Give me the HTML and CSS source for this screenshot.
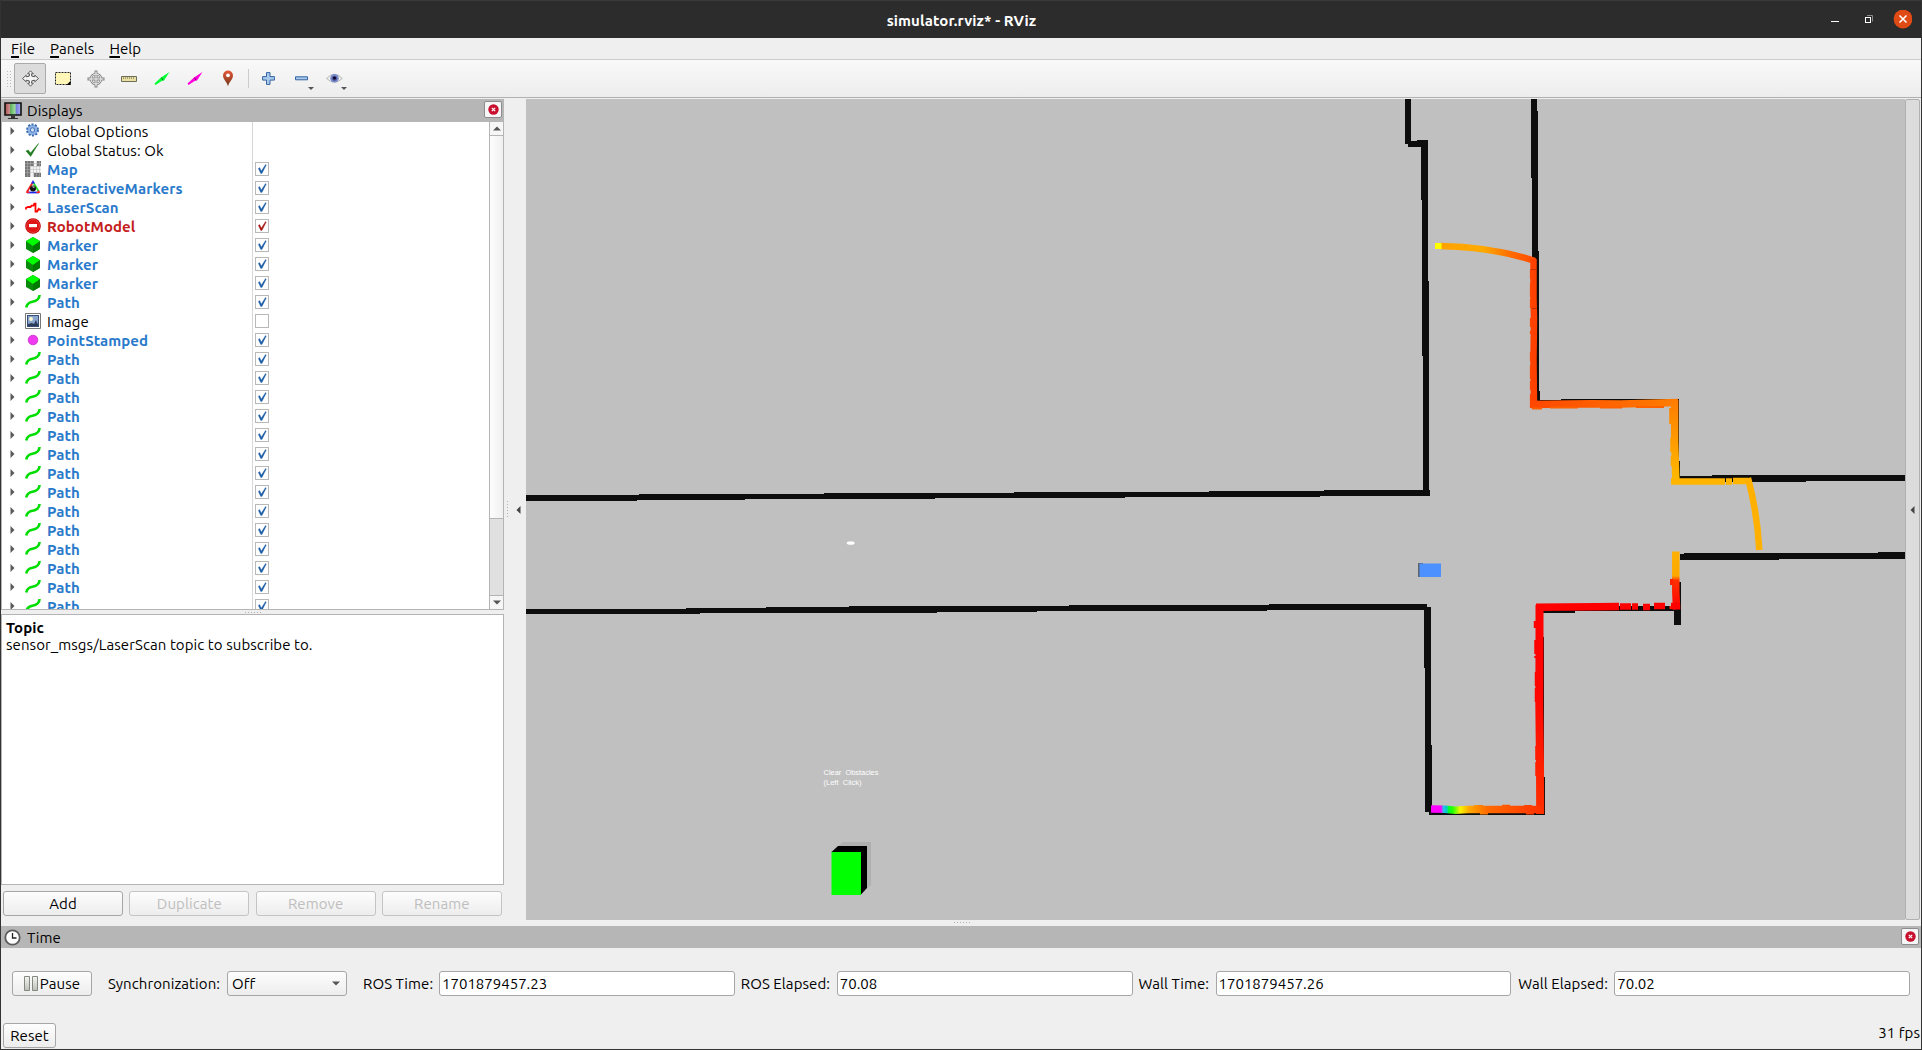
FILE: index.html
```html
<!DOCTYPE html>
<html lang="en">
<head>
<meta charset="utf-8">
<title>simulator.rviz* - RViz</title>
<link rel="stylesheet" href="styles.css">
</head>
<body>
<svg class="sprite" width="0" height="0" aria-hidden="true">
  <defs>
    <linearGradient id="gloss" x1="0" y1="0" x2="0" y2="1"><stop offset="0" stop-color="#e8563a"/><stop offset="1" stop-color="#6e3a1a"/></linearGradient>
    <linearGradient id="bar" x1="0" y1="0" x2="0" y2="1"><stop offset="0" stop-color="#f4f5f2"/><stop offset="1" stop-color="#bcc0b8"/></linearGradient>
    <linearGradient id="screen" x1="0" y1="0" x2="1" y2="0"><stop offset="0" stop-color="#a85050"/><stop offset=".3" stop-color="#d09090"/><stop offset=".34" stop-color="#60b060"/><stop offset=".64" stop-color="#a0e0a0"/><stop offset=".68" stop-color="#7078d8"/><stop offset="1" stop-color="#b0b0f4"/></linearGradient>
  </defs>
  <symbol id="arrow" viewBox="0 0 5 8"><path d="M0.5 0v8L4.5 4z" fill="#5a5a5a"/></symbol>
  <symbol id="check" viewBox="0 0 12 12"><path d="M2.300 5.400L3.700 4.600 5.300 8 9.500 1.600 10.300 2.100 6 10.400H4.700z" fill="currentColor" stroke="currentColor" stroke-width=".3"/></symbol>
  <symbol id="path" viewBox="0 0 16 16"><path d="M1.200 13.500C2 9.500 4.800 8.300 7.500 7.800S14.200 6.500 14.600 1" fill="none" stroke="#0d0" stroke-width="2.600"/></symbol>
  <symbol id="marker" viewBox="0 0 16 16"><path d="M8 0l7 4v8l-7 4-7-4V4z" fill="#0a8a0a"/><path d="M8 0l7 4.200L8 9 1 4.200z" fill="#0f0"/><path d="M8 9l7-4.800V12l-7 4z" fill="#007a00"/></symbol>
  <symbol id="gear" viewBox="0 0 16 16"><circle cx="7.500" cy="7" r="5.400" fill="#8fb3e6" stroke="#3c6bb0" stroke-width="2.200" stroke-dasharray="2 1.400"/><circle cx="7.500" cy="7" r="4.600" fill="#8fb3e6"/><circle cx="7.500" cy="7" r="2.200" fill="#cfe0f6" stroke="#3c6bb0" stroke-width=".9"/></symbol>
  <symbol id="ok" viewBox="0 0 16 16"><path d="M1 9l2.200-1L5.500 11 13.500 1.500 5.700 14.400z" fill="#1f7a1f" stroke="#1f7a1f" stroke-width=".5"/></symbol>
  <symbol id="map" viewBox="0 0 16 16"><path d="M0 0h16v16H0z" fill="#f4f4f4"/><path d="M0 0h9v5H5v11H0zM12 0h4v5h-4zM9 12h7v4H9z" fill="#777"/><path d="M2.500 0v16M5.500 0v16M8.500 0v16M11.500 0v16M14.500 0v16M0 2.500h16M0 5.500h16M0 8.500h16M0 11.500h16" stroke="#b4b4b4" stroke-width=".5"/></symbol>
  <symbol id="imark" viewBox="0 0 16 16"><path d="M8 2L2 12" stroke="#e22" stroke-width="1.800"/><path d="M8 2l6 10" stroke="#2d2" stroke-width="1.800"/><path d="M2 12.500h12" stroke="#22e" stroke-width="1.800"/><path d="M8 0l2 3.500H6z" fill="#22f"/><path d="M1 13l1-3 3 3z" fill="#f22"/><path d="M15 13l-1-3-3 3z" fill="#f22"/><circle cx="8" cy="8.500" r="3" fill="#111"/><path d="M6 6.500h4L9 8z" fill="#ccc"/></symbol>
  <symbol id="laser" viewBox="0 0 16 16"><path d="M1 10.500V8.800l2-.8h2.500l1-1.300h2l.8-2h1.200v7.800h1.600l1.600-2.700 1 .9h1.500" fill="none" stroke="#f00" stroke-width="1.800"/></symbol>
  <symbol id="stop" viewBox="0 0 16 16"><circle cx="8" cy="8" r="7.800" fill="#c00000"/><circle cx="8" cy="8" r="6.500" fill="#e01414" stroke="#f06060" stroke-width=".6"/><path d="M4 6h8v3.200H4z" fill="#fff"/></symbol>
  <symbol id="image" viewBox="0 0 16 16"><path d="M.5.5h15v15H.5z" fill="#fff" stroke="#777"/><path d="M2 2h12v12H2z" fill="#384f78"/><path d="M3 3h10v8H3z" fill="#8ba6cc"/><circle cx="6" cy="6" r="1.900" fill="#fffbd0"/><path d="M3 11l4-1 2 1 2-4 1 3 1 1v2H3z" fill="#2b3b58"/></symbol>
  <symbol id="point" viewBox="0 0 16 16"><circle cx="8" cy="8" r="4.800" fill="#f03af0" stroke="#c020c0" stroke-width=".7"/></symbol>
  <symbol id="closer" viewBox="0 0 11 11"><circle cx="5.500" cy="5.500" r="5.200" fill="#c8102e"/><path d="M3.800 3.800l3.400 3.400M7.200 3.800L3.800 7.200" stroke="#fff" stroke-width="1.200"/></symbol>
</svg>

<div class="window">
  <header class="titlebar">
    <span class="title">simulator.rviz* - RViz</span>
    <div class="controls">
      <svg width="84" height="20" viewBox="0 0 84 20">
        <path d="M3 11.500h8" stroke="#fff"/>
        <path d="M39 5.500h5.500v6" fill="none" stroke="#8a8a8a"/>
        <rect x="37.500" y="7.500" width="5" height="5" fill="none" stroke="#fff"/>
        <circle cx="75" cy="9" r="9.400" fill="#e04a14"/><path d="M71.500 5.500l7 7M78.500 5.500l-7 7" stroke="#fff" stroke-width="1.600"/>
      </svg>
    </div>
  </header>

  <nav class="menubar"><span><u>F</u>ile</span><span><u>P</u>anels</span><span><u>H</u>elp</span></nav>

  <div class="toolbar">
    <span class="grip"></span>
    <span class="tool active"><svg width="17" height="17" viewBox="0 0 17 17"><path d="M8.500.8l2.800 3H9.500l.3 2.400 3 .6V5.200l3.700 3.300-3.700 3.300v-1.600l-3 .6-.3 2.400h1.800l-2.800 3-2.800-3h1.800l-.3-2.400-3-.6v1.600L.5 8.500l3.700-3.300v1.600l3-.6.3-2.400H5.700z" fill="#f4f4f4" stroke="#5a5a5a" stroke-width="1"/></svg></span>
    <span class="tool"><svg width="18" height="16" viewBox="0 0 18 16"><path d="M1.500 1.500h15v12h-15z" fill="#fff6b8" stroke="#222" stroke-dasharray="2 1"/><path d="M16.500 10v4h-4z"/></svg></span>
    <span class="tool"><svg width="18" height="18" viewBox="0 0 18 18"><path d="M9 .5v17M.5 9h17" stroke="#858585" stroke-width="3"/><circle cx="9" cy="9" r="5" fill="none" stroke="#858585" stroke-width="2.600"/><circle cx="9" cy="9" r="5" fill="none" stroke="#f4f4f4" stroke-width="1"/><path d="M9 1.500v15M1.500 9h15" stroke="#f4f4f4" stroke-width="1"/></svg></span>
    <span class="tool"><svg width="17" height="16" viewBox="0 0 17 16"><path d="M.5 5.500h15v5H.5z" fill="#ebe0a4" stroke="#6e6e58"/><path d="M2.500 6v2M4.500 6v2M6.500 6v2M8.500 6v2M10.500 6v2M12.500 6v2" stroke="#8a8460" stroke-width=".7"/></svg></span>
    <span class="tool"><svg width="16" height="16" viewBox="0 0 16 16"><path d="M.5 12.500L7 6.500 15.500 1 10 9.500H8.500L1.500 14z" fill="#0f3"/><path d="M7.500 6.500l1.500 3" stroke="#080"/></svg></span>
    <span class="tool"><svg width="16" height="16" viewBox="0 0 16 16"><path d="M.5 12.500L7 6.500 15.500 1 10 9.500H8.500L1.500 14z" fill="#f0d"/><path d="M7.500 6.500l1.500 3" stroke="#807"/></svg></span>
    <span class="tool"><svg width="12" height="17" viewBox="0 0 12 17"><path d="M6 16.500C5 11.500 1 9.500 1 5.500a5 5 0 0 1 10 0c0 4-4 6-5 11z" fill="url(#gloss)"/><circle cx="6" cy="5.300" r="1.900" fill="#fff"/></svg></span>
    <span class="split"></span>
    <span class="tool"><svg width="13" height="13" viewBox="0 0 13 13"><path d="M4.500.6h3.500v4h4.400v3.500H8v4.300H4.500V8.100H.6V4.600h3.900z" fill="#a9c9ea" stroke="#3465a4"/></svg></span>
    <span class="tool drop"><svg width="13" height="13" viewBox="0 0 13 13"><path d="M.5 4.800h12v3H.5z" fill="#a9c9ea" stroke="#3465a4"/></svg></span>
    <span class="tool drop"><svg width="17" height="13" viewBox="0 0 17 13"><path d="M.6 6.500Q8.300-2 16.300 6.500 8.300 14 .6 6.500z" fill="#f2f2f2" stroke="#b4b4b4"/><circle cx="8.500" cy="6.300" r="4.300" fill="#7c8fcc"/><circle cx="8.500" cy="6.300" r="2.600" fill="#4a5a9c"/><circle cx="8.500" cy="6" r="1.500" fill="#102"/></svg></span>
  </div>

  <main class="work">
    <section class="dock">
      <div class="dock-head"><svg width="18" height="18" viewBox="0 0 18 18"><path d="M1 1h16v12H1z" fill="url(#screen)" stroke="#111" stroke-width="1.600"/><path d="M7 14h4v2h3v1H4v-1h3z" fill="#333"/></svg><span>Displays</span><span class="close"><svg width="11" height="11"><use href="#closer"/></svg></span></div>
      <div class="tree">
        <div class="rows">
          <div class="row plain"><svg class="a"><use href="#arrow"/></svg><svg class="i"><use href="#gear"/></svg><span class="n">Global Options</span></div>
          <div class="row plain"><svg class="a"><use href="#arrow"/></svg><svg class="i"><use href="#ok"/></svg><span class="n">Global Status: Ok</span></div>
          <div class="row"><svg class="a"><use href="#arrow"/></svg><svg class="i"><use href="#map"/></svg><span class="n">Map</span><svg class="c"><use href="#check"/></svg></div>
          <div class="row"><svg class="a"><use href="#arrow"/></svg><svg class="i"><use href="#imark"/></svg><span class="n">InteractiveMarkers</span><svg class="c"><use href="#check"/></svg></div>
          <div class="row"><svg class="a"><use href="#arrow"/></svg><svg class="i"><use href="#laser"/></svg><span class="n">LaserScan</span><svg class="c"><use href="#check"/></svg></div>
          <div class="row error"><svg class="a"><use href="#arrow"/></svg><svg class="i"><use href="#stop"/></svg><span class="n">RobotModel</span><svg class="c"><use href="#check"/></svg></div>
          <div class="row"><svg class="a"><use href="#arrow"/></svg><svg class="i"><use href="#marker"/></svg><span class="n">Marker</span><svg class="c"><use href="#check"/></svg></div>
          <div class="row"><svg class="a"><use href="#arrow"/></svg><svg class="i"><use href="#marker"/></svg><span class="n">Marker</span><svg class="c"><use href="#check"/></svg></div>
          <div class="row"><svg class="a"><use href="#arrow"/></svg><svg class="i"><use href="#marker"/></svg><span class="n">Marker</span><svg class="c"><use href="#check"/></svg></div>
          <div class="row"><svg class="a"><use href="#arrow"/></svg><svg class="i"><use href="#path"/></svg><span class="n">Path</span><svg class="c"><use href="#check"/></svg></div>
          <div class="row plain"><svg class="a"><use href="#arrow"/></svg><svg class="i"><use href="#image"/></svg><span class="n">Image</span><svg class="c"></svg></div>
          <div class="row"><svg class="a"><use href="#arrow"/></svg><svg class="i"><use href="#point"/></svg><span class="n">PointStamped</span><svg class="c"><use href="#check"/></svg></div>
          <div class="row"><svg class="a"><use href="#arrow"/></svg><svg class="i"><use href="#path"/></svg><span class="n">Path</span><svg class="c"><use href="#check"/></svg></div>
          <div class="row"><svg class="a"><use href="#arrow"/></svg><svg class="i"><use href="#path"/></svg><span class="n">Path</span><svg class="c"><use href="#check"/></svg></div>
          <div class="row"><svg class="a"><use href="#arrow"/></svg><svg class="i"><use href="#path"/></svg><span class="n">Path</span><svg class="c"><use href="#check"/></svg></div>
          <div class="row"><svg class="a"><use href="#arrow"/></svg><svg class="i"><use href="#path"/></svg><span class="n">Path</span><svg class="c"><use href="#check"/></svg></div>
          <div class="row"><svg class="a"><use href="#arrow"/></svg><svg class="i"><use href="#path"/></svg><span class="n">Path</span><svg class="c"><use href="#check"/></svg></div>
          <div class="row"><svg class="a"><use href="#arrow"/></svg><svg class="i"><use href="#path"/></svg><span class="n">Path</span><svg class="c"><use href="#check"/></svg></div>
          <div class="row"><svg class="a"><use href="#arrow"/></svg><svg class="i"><use href="#path"/></svg><span class="n">Path</span><svg class="c"><use href="#check"/></svg></div>
          <div class="row"><svg class="a"><use href="#arrow"/></svg><svg class="i"><use href="#path"/></svg><span class="n">Path</span><svg class="c"><use href="#check"/></svg></div>
          <div class="row"><svg class="a"><use href="#arrow"/></svg><svg class="i"><use href="#path"/></svg><span class="n">Path</span><svg class="c"><use href="#check"/></svg></div>
          <div class="row"><svg class="a"><use href="#arrow"/></svg><svg class="i"><use href="#path"/></svg><span class="n">Path</span><svg class="c"><use href="#check"/></svg></div>
          <div class="row"><svg class="a"><use href="#arrow"/></svg><svg class="i"><use href="#path"/></svg><span class="n">Path</span><svg class="c"><use href="#check"/></svg></div>
          <div class="row"><svg class="a"><use href="#arrow"/></svg><svg class="i"><use href="#path"/></svg><span class="n">Path</span><svg class="c"><use href="#check"/></svg></div>
          <div class="row"><svg class="a"><use href="#arrow"/></svg><svg class="i"><use href="#path"/></svg><span class="n">Path</span><svg class="c"><use href="#check"/></svg></div>
          <div class="row"><svg class="a"><use href="#arrow"/></svg><svg class="i"><use href="#path"/></svg><span class="n">Path</span><svg class="c"><use href="#check"/></svg></div>
        </div>
        <div class="scroll"><span class="sb"><svg width="8" height="5"><path d="M0 4.500L4 .5l4 4z" fill="#555"/></svg></span><span class="thumb"></span><span class="trough"></span><span class="sb down"><svg width="8" height="5"><path d="M0 .5L4 4.500l4-4z" fill="#555"/></svg></span></div>
      </div>
      <div class="hsplit"><i class="dots"></i></div>
      <div class="desc"><b>Topic</b><span>sensor_msgs/LaserScan topic to subscribe to.</span></div>
      <div class="actions"><button>Add</button><button disabled>Duplicate</button><button disabled>Remove</button><button disabled>Rename</button></div>
    </section>

    <div class="vsplit"><i class="vdots"></i><svg width="5" height="8"><path d="M4.500 0v8L.5 4z" fill="#444"/></svg></div>

    <svg class="scene" width="1379" height="821" viewBox="526 99 1379 821">
      <defs>
        <linearGradient id="g-arc" gradientUnits="userSpaceOnUse" x1="1441" y1="0" x2="1535" y2="0"><stop offset="0" stop-color="#ffa200"/><stop offset=".45" stop-color="#ffaa00"/><stop offset=".75" stop-color="#ff6a00"/><stop offset="1" stop-color="#ff4a00"/></linearGradient>
        <linearGradient id="g-top" gradientUnits="userSpaceOnUse" x1="1535" y1="0" x2="1678" y2="0"><stop offset="0" stop-color="#ff4800"/><stop offset="1" stop-color="#ff7e00"/></linearGradient>
        <linearGradient id="g-right" gradientUnits="userSpaceOnUse" x1="0" y1="400" x2="0" y2="484"><stop offset="0" stop-color="#ff7c00"/><stop offset="1" stop-color="#ffbc00"/></linearGradient>
        <linearGradient id="g-low" gradientUnits="userSpaceOnUse" x1="0" y1="552" x2="0" y2="609"><stop offset="0" stop-color="#ffb000"/><stop offset=".42" stop-color="#ffa800"/><stop offset=".5" stop-color="#ff3000"/><stop offset="1" stop-color="#f00"/></linearGradient>
        <linearGradient id="g-down" gradientUnits="userSpaceOnUse" x1="0" y1="604" x2="0" y2="814"><stop offset="0" stop-color="#f00"/><stop offset=".4" stop-color="#ff0400"/><stop offset="1" stop-color="#ff3000"/></linearGradient>
        <linearGradient id="g-end" gradientUnits="userSpaceOnUse" x1="1431" y1="0" x2="1543" y2="0"><stop offset="0" stop-color="#f0f"/><stop offset=".09" stop-color="#f0f"/><stop offset=".11" stop-color="#30b8f0"/><stop offset=".14" stop-color="#0cc"/><stop offset=".16" stop-color="#0f2"/><stop offset=".2" stop-color="#3f0"/><stop offset=".26" stop-color="#f6f600"/><stop offset=".34" stop-color="#ffa800"/><stop offset=".5" stop-color="#ff6c00"/><stop offset="1" stop-color="#ff3000"/></linearGradient>
      </defs>
      <g fill="#0d0d0d" shape-rendering="crispEdges">
        <path d="M1405 99h6v42h6v-1h11v141h1v75h0v139h-6V356h-1V200h-1v-53h-13v-3h-3z"/>
        <path d="M526 495h113v-1h185v-1h190v-1h195v-1h115v-1h106v6h-110v1h-195v1h-190v1h-190v1H637v1H526z"/>
        <path d="M526 609h160v-1h80v-1h83v-1h220v-1h200v-1h158v6h-160v1h-230v1h-100v1H700v1H526z"/>
        <path d="M1424 607h7v138h1v67h113v3h-116v-3h-4V668h-1z"/>
        <path d="M1531 99h6v12h1v140h1v140h1v9h21v-1h118v62h1v23h-5v-79h-143V178h-1z"/>
        <path d="M1680 476h32v-1h193v6h-99v1h-126z"/>
        <path d="M1680 554h4v-1h194v-1h27v7h-126v1h-99z"/>
        <path d="M1675 582h6v43h-7v-14h-99v2h-35v24h4v140h1v36h-8V606h138z"/>
      </g>
      <g fill="none" stroke-linejoin="miter">
        <path d="M1440 246Q1493 247 1535 261" stroke="url(#g-arc)" stroke-width="6.500"/>
        <path d="M1435 243h6.500v6H1435z" fill="#ff0"/>
        <path d="M1533.500 259v40l.5 20-.5 40 .5 49" stroke="#ff4100" stroke-width="6.500"/>
        <path d="M1531 270v40M1531 318v16M1531 352v57" stroke="#ff4500" stroke-width="2.200" stroke-dasharray="9 4 14 2"/>
        <path d="M1530.500 269.500h6M1532 308.500h5" stroke="#b22c00" stroke-width=".8"/>
        <path d="M1531 404.500l60-.8 30 .3 57-1.500" stroke="url(#g-top)" stroke-width="7.500"/>
        <path d="M1532 408.500h10M1550 407.500h28M1600 407.500h22M1636 407h28" stroke="#ff6000" stroke-width="1.800"/>
        <path d="M1674.700 400v41l1.300 43" stroke="url(#g-right)" stroke-width="7.500"/>
        <path d="M1670.500 408v16M1671.500 438v14M1672 456v10" stroke="url(#g-right)" stroke-width="2.500"/>
        <path d="M1671 481.500h54M1726 481.500h6M1733 481h15" stroke="#ffb400" stroke-width="6.500"/>
        <path d="M1748 478Q1757.500 514 1759.300 550" stroke="#ffb000" stroke-width="6.500"/>
        <path d="M1675.800 551.500v40l.8 18" stroke="url(#g-low)" stroke-width="7.500"/>
        <path d="M1671.500 579v6M1671 606v3" stroke="#f20" stroke-width="3"/>
        <path d="M1536 607.300l60-.5 23-.3" stroke="#f00" stroke-width="7.500"/>
        <path d="M1620 606.500h11M1632 606.500h6M1643 607h7M1654 606h11M1671 606h9" stroke="#f00" stroke-width="6.500"/>
        <path d="M1539.500 605v40l-.2 60 .7 60 .2 49" stroke="url(#g-down)" stroke-width="8"/>
        <path d="M1535 621v7M1535.500 640v18M1536 672v32M1536.500 746v32" stroke="url(#g-down)" stroke-width="2.500" stroke-dasharray="14 2"/>
        <path d="M1431 809l14 .3 10 .9 13-.6 75-.1" stroke="url(#g-end)" stroke-width="7.500"/>
        <path d="M1474 806h9M1502 805.800h8M1524 806h8M1480 813.500h8M1526 813.500h8" stroke="url(#g-end)" stroke-width="2"/>
      </g>
      <path d="M1418 563h5v14h-5z" fill="#5c646e"/><path d="M1419.500 563.500h21.500V577h-21.500z" fill="#4d90ff"/>
      <ellipse cx="850.700" cy="543" rx="4" ry="1.800" fill="#fff"/>
      <text class="marker-text" x="823.500" y="774.500" textLength="55">Clear&#160; Obstacles</text>
      <text class="marker-text" x="823.500" y="785" textLength="38">(Left&#160; Click)</text>
      <path d="M837 847l6-5h28v43l-4 4z" fill="#b0b0b0"/>
      <path d="M831.500 852l6.500-6h29v42l-6 6.500z" fill="#000"/>
      <path d="M831.500 852H861v43h-29.500z" fill="#0f0"/>
    </svg>

    <div class="vhandle"><svg width="5" height="8"><path d="M4.500 0v8L.5 4z" fill="#444"/></svg></div>
  </main>

  <div class="hsplit wide"><i class="dots"></i></div>
  <div class="dock-head time"><svg width="17" height="17" viewBox="0 0 17 17"><circle cx="8.500" cy="8.500" r="7.200" fill="#fff" stroke="#5c5c5c" stroke-width="1.800"/><path d="M8.500 4v5h4" fill="none" stroke="#222" stroke-width="1.300"/></svg><span>Time</span><span class="close"><svg width="11" height="11"><use href="#closer"/></svg></span></div>

  <div class="clock">
    <button class="pause"><svg width="14" height="17" viewBox="0 0 14 17"><path d="M.5 1.500h5v14h-5zM8.500 1.500h5v14h-5z" fill="url(#bar)" stroke="#85887f"/></svg>Pause</button>
    <label class="l-sync">Synchronization:</label>
    <span class="select">Off<svg width="8" height="5"><path d="M0 .5L4 4.500l4-4z" fill="#555"/></svg></span>
    <label class="l-ros">ROS Time:</label><span class="field">1701879457.23</span>
    <label class="l-rose">ROS Elapsed:</label><span class="field">70.08</span>
    <label class="l-wall">Wall Time:</label><span class="field">1701879457.26</span>
    <label class="l-walle">Wall Elapsed:</label><span class="field">70.02</span>
  </div>
  <footer class="status"><button>Reset</button><span class="fps">31 fps</span></footer>
</div>
</body>
</html>
```
FILE: styles.css
```css
* { box-sizing: border-box; }
body { margin: 0; background: #efefef; font-family: Ubuntu, "Noto Sans", sans-serif; font-size: 15px; letter-spacing: .08px; line-height: 19px; color: #000; }
svg { display: block; flex: none; }
.sprite { position: absolute; }
.window { width: 1922px; height: 1050px; display: flex; flex-direction: column; border: 1px solid #333; border-top: 0; overflow: hidden; }

.titlebar { height: 38px; flex: none; margin: 0 -1px; background: #2c2c2c; border-top: 1px solid #3a3a3a; display: grid; grid-template-columns: 1fr auto 1fr; align-items: center; color: #fff; font-weight: bold; }
.title { grid-column: 2; padding: 1px 0 0 1px; }
.controls { justify-self: end; padding-right: 10px; }

.menubar { height: 22px; flex: none; display: flex; gap: 15px; padding: 1px 0 0 10px; border-bottom: 1px solid #ccc; }
.menubar u { text-underline-offset: 2px; text-decoration-thickness: 2px; }

.toolbar { height: 38px; flex: none; display: flex; align-items: center; gap: 1px; padding-left: 5px; background: linear-gradient(#f9f9f9, #ededed); border-bottom: 1px solid #b0b0b0; }
.grip { width: 5px; height: 18px; margin-right: 2px; background: radial-gradient(circle, #bbb .7px, transparent .9px) 0 0 / 3px 3px; }
.tool { width: 32px; height: 31px; display: flex; align-items: center; justify-content: center; border: 1px solid transparent; border-radius: 2px; position: relative; }
.active { background: #dcdcdc; border-color: #aaa; }
.split { width: 1px; height: 19px; background: #ccc; margin: 0 2px 0 3px; }
.drop::after { content: ""; position: absolute; right: 2px; bottom: 3px; border: 3px solid transparent; border-top-color: #555; border-bottom: 0; }

.work { height: 822px; flex: none; display: flex; padding-top: 1px; background: #efefef; }
.dock { width: 503px; display: flex; flex-direction: column; }
.dock-head { height: 23px; flex: none; background: #b6b6b6; display: flex; align-items: center; padding: 0 2px 0 3px; gap: 5px; }
.close { margin-left: auto; width: 18px; height: 17px; background: #f6f6f6; border: 1px solid #8c8c8c; border-radius: 2px; display: flex; align-items: center; justify-content: center; margin-bottom: 2px; }
.tree { height: 488px; flex: none; display: flex; border: 1px solid #b4b4b4; border-top: 0; background: #fff; }
.rows { flex: 1; overflow: hidden; background: linear-gradient(90deg, transparent 250px, #d6d6d6 250px, #d6d6d6 251px, transparent 251px); }
.row { height: 19px; display: flex; align-items: center; padding-left: 8px; color: #2a7acb; font-weight: bold; }
.row.plain { color: #000; font-weight: normal; }
.row.error { color: #c42020; }
.row svg { margin-bottom: 1px; }
.a { width: 5px; height: 8px; margin-right: 10px; }
.i { width: 16px; height: 16px; margin-right: 6px; }
.n { width: 208px; white-space: nowrap; }
.c { width: 14px; height: 14px; border: 1px solid #b8b8b8; background: #fff; color: #1f5fa8; }
.error .c { color: #a81c1c; }
.scroll { width: 14px; display: flex; flex-direction: column; border-left: 1px solid #b4b4b4; }
.sb { height: 14px; display: flex; align-items: center; justify-content: center; background: #f6f6f6; border-bottom: 1px solid #b4b4b4; }
.sb.down { border-bottom: 0; border-top: 1px solid #b4b4b4; }
.thumb { height: 383px; background: linear-gradient(90deg, #fdfdfd, #f0f0f0); border-bottom: 1px solid #b4b4b4; }
.trough { flex: 1; background: #e0e0e0; }
.hsplit { height: 4px; flex: none; display: flex; align-items: center; justify-content: center; padding-left: 3px; }
.hsplit.wide { height: 6px; padding: 0 0 2px 4px; }
.dots { width: 18px; height: 1px; background: repeating-linear-gradient(90deg, #b0b0b0 0 1px, transparent 1px 3px); }
.desc { height: 271px; flex: none; background: #fff; border: 1px solid #b4b4b4; padding: 4px; display: flex; flex-direction: column; line-height: 17px; }
.actions { display: grid; grid-template-columns: repeat(4, 120px); gap: 6.3px; padding: 6px 2px; }
button { height: 25px; font: inherit; letter-spacing: inherit; line-height: 19px; color: #000; background: linear-gradient(#fdfdfd, #ededed); border: 1px solid #a6a6a6; border-radius: 3px; padding: 0; display: flex; align-items: center; justify-content: center; }
button:disabled { color: #bebebe; border-color: #c4c4c4; }

.vsplit { width: 22px; display: flex; align-items: center; padding-left: 3px; gap: 8px; }
.vdots { width: 1px; height: 17px; background: repeating-linear-gradient(#b0b0b0 0 1px, transparent 1px 3px); }
.scene { background: #c0c0c0; }
.marker-text { font: 7.5px "Liberation Sans", sans-serif; letter-spacing: 0; fill: #fff; }
.vhandle { width: 15px; background: #dcdcdc; border: 1px solid #b0b0b0; border-radius: 2px; display: flex; align-items: center; justify-content: center; }

.dock-head.time { height: 22px; gap: 6px; }
.clock { height: 70px; flex: none; display: flex; align-items: flex-start; padding: 23px 11px 0; white-space: nowrap; }
.clock label { height: 25px; padding-top: 3px; flex: none; }
.pause { width: 80px; gap: 2px; flex: none; margin-right: 16px; }
.l-sync { width: 119px; }
.l-ros { width: 76px; }
.l-rose { width: 96px; margin-left: 6px; }
.l-wall { width: 77px; margin-left: 6px; }
.l-walle { width: 96px; margin-left: 7px; }
.select { width: 120px; height: 25px; flex: none; margin-right: 16px; background: linear-gradient(#fdfdfd, #ededed); border: 1px solid #a6a6a6; border-radius: 3px; display: flex; align-items: center; justify-content: space-between; padding: 0 6px 0 4px; }
.field { flex: 1; height: 25px; background: #fff; border: 1px solid #a6a6a6; border-radius: 3px; padding: 2px; letter-spacing: 0; }
.status { flex: 1; display: flex; justify-content: space-between; align-items: flex-end; padding: 0 1px 1px 2px; }
.status button { width: 53px; }
.fps { padding-bottom: 6px; }
```
